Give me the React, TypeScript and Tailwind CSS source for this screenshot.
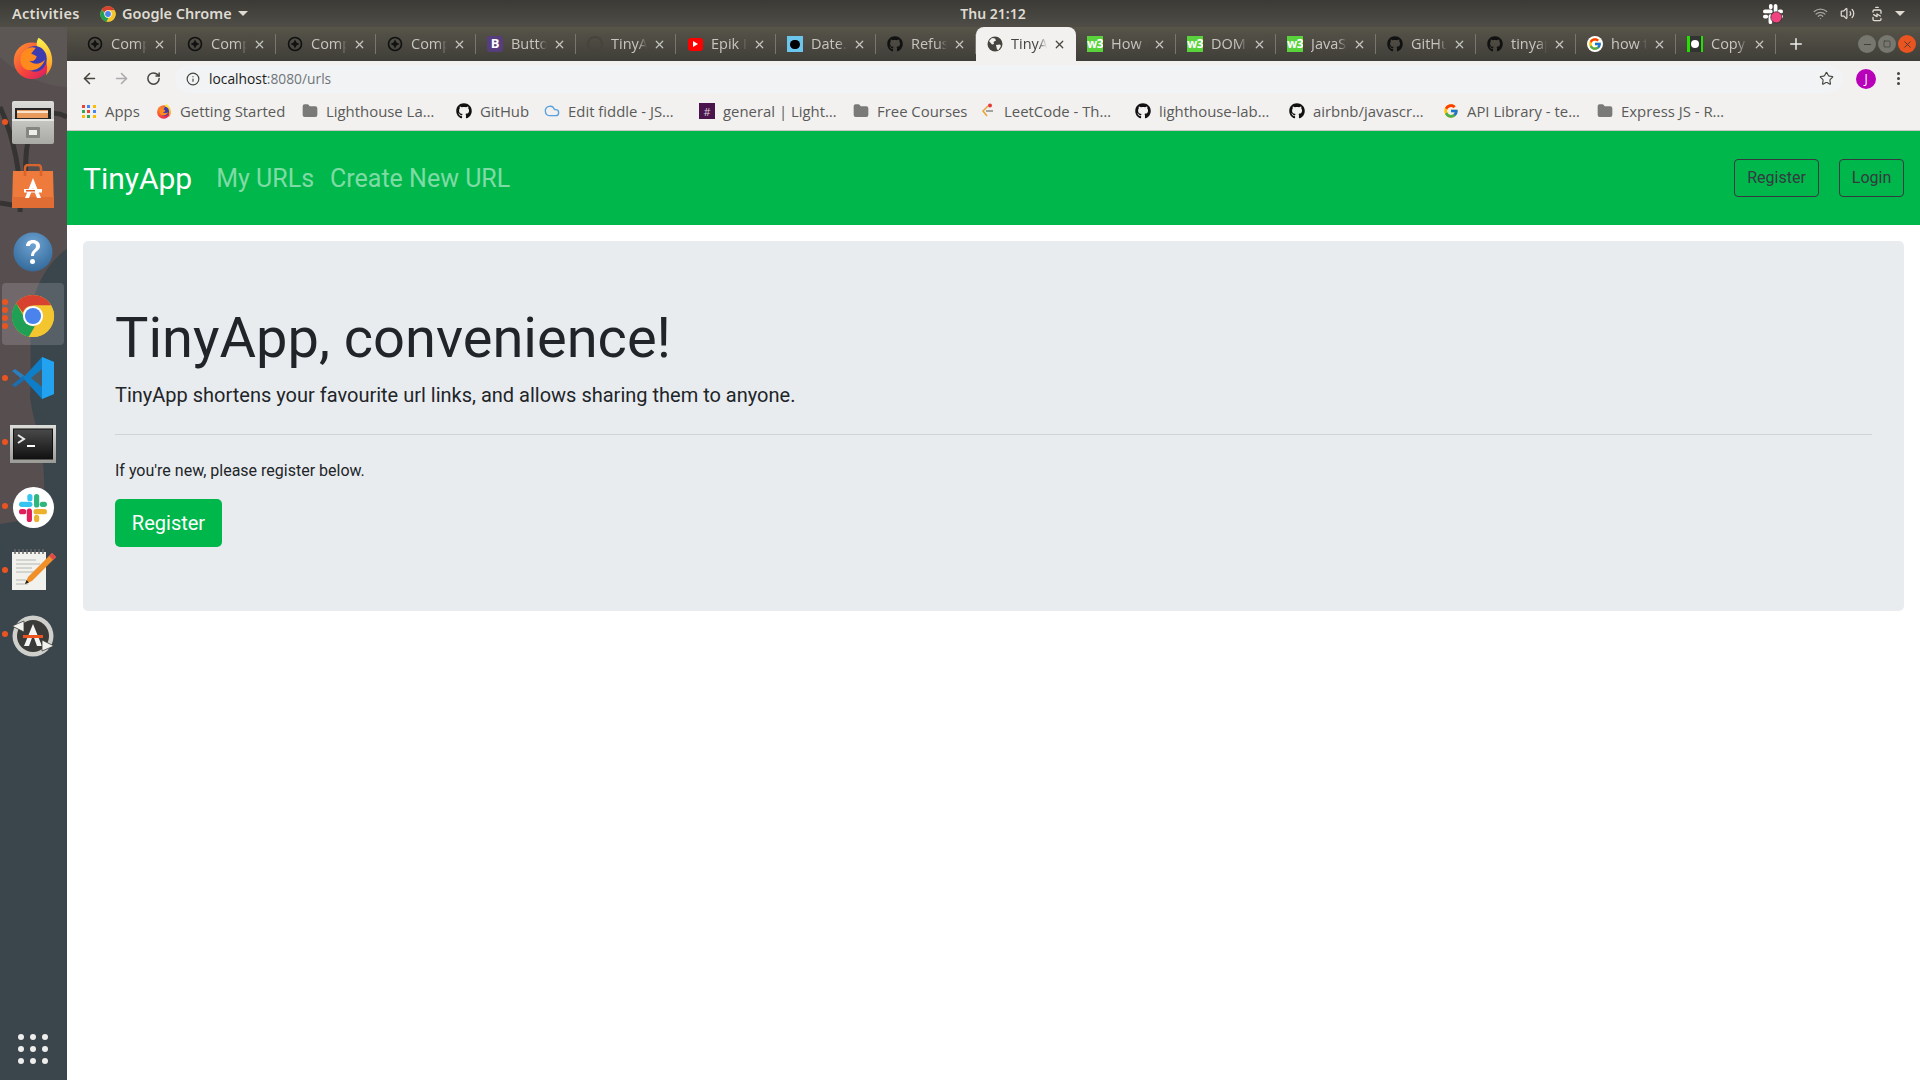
import React from "react";
import { FaGithub } from "react-icons/fa";
import { FcGoogle } from "react-icons/fc";
import { ArrowLeft, ArrowRight, RotateCw, Info, Star, Plus, X, Minus, Square, Folder, Wifi, Volume2, BatteryCharging, Cloud } from "lucide-react";

const ChromeIcon = ({ s = 44 }: { s?: number }) => (
  <svg width={s} height={s} viewBox="0 0 48 48">
    <circle cx="24" cy="24" r="23" fill="#e0c03a" />
    <path d="M24 1a23 23 0 0 1 19.900 11.500H24a11.500 11.500 0 0 0-11 8L5.600 10.200A23 23 0 0 1 24 1z" fill="#d8402f" />
    <path d="M5.600 10.200 14 24.600a11.500 11.500 0 0 0 12 10.700L19.600 46.600A23 23 0 0 1 5.600 10.200z" fill="#1fa055" />
    <path d="M43.900 12.500A23 23 0 0 1 19.600 46.600L30 29.800a11.500 11.500 0 0 0-6-17.300z" fill="#f3c52f" />
    <circle cx="24" cy="24" r="11" fill="#fff" />
    <circle cx="24" cy="24" r="8.800" fill="#4a83ec" />
  </svg>
);

const FirefoxIcon = ({ s = 44 }: { s?: number }) => (
  <svg width={s} height={s} viewBox="0 0 48 48">
    <defs>
      <linearGradient id="ffa" x1="0" y1="0" x2="1" y2="1">
        <stop offset="0" stopColor="#ff9a2e" />
        <stop offset="0.55" stopColor="#f7433c" />
        <stop offset="1" stopColor="#d6156e" />
      </linearGradient>
      <linearGradient id="ffb" x1="0.5" y1="0" x2="0.5" y2="1">
        <stop offset="0" stopColor="#fff44f" />
        <stop offset="1" stopColor="#ff8a1e" />
      </linearGradient>
    </defs>
    <circle cx="23" cy="27" r="20" fill="url(#ffa)" />
    <path d="M30 2c7 4 15 13 15 25 0 7-3 12-7 16 2-6 2-12-1-18-3-5-9-9-9-16 0-3 1-5 2-7z" fill="url(#ffb)" />
    <ellipse cx="26" cy="25" rx="13" ry="14" fill="#3d3bb0" />
    <path d="M12 19c4-6 10-8 15-6l-5 6 6 3c-1 5-5 6-8 5 4 4 11 5 17-1-3 9-11 13-19 11C11 35 8 26 12 19z" fill="#ff8a1e" />
  </svg>
);

const CabinetIcon = () => (
  <svg width="42" height="44" viewBox="0 0 42 44">
    <defs>
      <linearGradient id="cab" x1="0" y1="0" x2="0" y2="1">
        <stop offset="0" stopColor="#dcdcd9" />
        <stop offset="1" stopColor="#a9a9a6" />
      </linearGradient>
    </defs>
    <rect x="0" y="1" width="42" height="43" rx="2" fill="url(#cab)" />
    <rect x="3" y="8" width="36" height="12" fill="#262626" />
    <rect x="5" y="10" width="31" height="8" fill="#e89a5c" />
    <rect x="5" y="11" width="31" height="2" fill="#f7e3d0" />
    <rect x="0" y="19" width="42" height="2" fill="#e7e7e4" />
    <rect x="14" y="27" width="14" height="11" rx="1" fill="#858582" />
    <rect x="17" y="30" width="8" height="5" fill="#eeeeec" />
  </svg>
);

const BagIcon = () => (
  <svg width="42" height="44" viewBox="0 0 42 44">
    <path d="M1 7h40l1 36H0z" fill="#ee7a3c" />
    <path d="M0 33h42v11H0z" fill="#e06e34" />
    <path d="M13 12V4q0-3 3-3h10q3 0 3 3v8" fill="none" stroke="#d9642c" strokeWidth="2.500" />
    <path d="M21 14l-8 20h4l4-10 4 10h4z" fill="#fff" />
    <rect x="12" y="25" width="18" height="3.500" fill="#fff" />
    <rect x="14" y="26" width="9" height="1.500" fill="#e2572a" />
  </svg>
);

const HelpIcon = () => (
  <svg width="40" height="40" viewBox="0 0 40 40">
    <defs>
      <radialGradient id="hlp" cx="0.5" cy="0.3" r="0.8">
        <stop offset="0" stopColor="#6ea3d2" />
        <stop offset="1" stopColor="#2c6394" />
      </radialGradient>
    </defs>
    <circle cx="20" cy="20" r="19.500" fill="url(#hlp)" />
    <path d="M13 14c0-4 3-6 7-6s7 2.400 7 6c0 5-6 5-6 10h-3c0-6 5-6 5-10 0-1.600-1.500-2.700-3-2.700s-3 1-3 2.700z" fill="#fff" />
    <circle cx="19.500" cy="29.500" r="2.500" fill="#fff" />
  </svg>
);

const VSCodeIcon = () => (
  <svg width="42" height="42" viewBox="0 0 42 42">
    <path d="M0 14l3-2 11 8-3 3z" fill="#2a7fbf" />
    <path d="M0 28l3 2 11-8-3-3z" fill="#1a6fb0" />
    <path d="M30 0L11 21l19 21 12-5V5z" fill="#0f7ec9" />
    <path d="M30 0l12 5v32l-12 5z" fill="#23a3ef" />
    <path d="M30 12L19 21l11 9z" fill="#4b5a62" />
  </svg>
);

const TerminalIcon = () => (
  <svg width="46" height="38" viewBox="0 0 46 38">
    <defs>
      <linearGradient id="trm" x1="0" y1="0" x2="0" y2="1">
        <stop offset="0" stopColor="#4a4a4a" />
        <stop offset="1" stopColor="#111" />
      </linearGradient>
      <linearGradient id="trf" x1="0" y1="0" x2="0" y2="1">
        <stop offset="0" stopColor="#dcdcd9" />
        <stop offset="1" stopColor="#9a9a97" />
      </linearGradient>
    </defs>
    <rect width="46" height="38" fill="url(#trf)" />
    <rect x="3.500" y="4" width="39" height="30" fill="url(#trm)" stroke="#111" />
    <path d="M8 10l6 4-6 4" fill="none" stroke="#e8e8e8" strokeWidth="2" />
    <rect x="17" y="20" width="8" height="2" fill="#fff" />
  </svg>
);

const SlackGlyph = ({ s = 28 }: { s?: number }) => (
  <svg width={s} height={s} viewBox="0 0 54 54">
    <g fill="none" strokeWidth="10" strokeLinecap="round">
      <path d="M5 20h16" stroke="#36c5f0" />
      <path d="M21 5v4" stroke="#36c5f0" />
      <path d="M34 5v16" stroke="#2eb67d" />
      <path d="M49 20h-4" stroke="#2eb67d" />
      <path d="M49 34H33" stroke="#ecb22e" />
      <path d="M34 49v-4" stroke="#ecb22e" />
      <path d="M20 49V33" stroke="#e01e5a" />
      <path d="M5 34h4" stroke="#e01e5a" />
    </g>
  </svg>
);

const SlackTray = () => (
  <svg width="20" height="20" viewBox="0 0 54 54">
    <g fill="none" strokeWidth="10" strokeLinecap="round" stroke="#fff">
      <path d="M5 20h16M21 5v4M34 5v16M49 20h-4M49 34H33M20 49V33M5 34h4" />
    </g>
    <circle cx="36" cy="36" r="15" fill="#f0437f" stroke="#2e2d29" strokeWidth="2" />
  </svg>
);

const NotepadIcon = () => (
  <svg width="46" height="42" viewBox="0 0 46 42">
    <rect x="2" y="3" width="34" height="38" fill="#f1f1ee" />
    <g stroke="#666" strokeWidth="1.500">
      {[5, 9, 13, 17, 21, 25, 29, 33].map((x) => <path key={x} d={`M${x} 0v5`} />)}
    </g>
    <g stroke="#b5b5b0" strokeWidth="1">
      <path d="M6 11h20M6 15h24M6 19h16M6 23h20M6 31h10M6 35h12" />
    </g>
    <path d="M42 4l4 4-24 24-7 3 3-7z" fill="#f0902a" />
    <path d="M42 4l4 4-3 3-4-4z" fill="#dd4b4b" />
    <path d="M15 35l1.500-4 2.500 2.500z" fill="#222" />
  </svg>
);

const UpdaterIcon = () => (
  <svg width="42" height="42" viewBox="0 0 42 42">
    <circle cx="21" cy="21" r="20.500" fill="#cfcfcc" />
    <circle cx="21" cy="21" r="16" fill="#3a3a38" />
    <path d="M21 9l-9 22h5l4-11 4 11h5z" fill="#f4f4f2" />
    <rect x="11" y="20" width="20" height="3" fill="#e95420" />
    <path d="M0 11l12-5 0 11z" fill="#f1f1ee" stroke="#3a3a38" strokeWidth="0.800" />
    <path d="M42 31l-12 5 0-11z" fill="#f1f1ee" stroke="#3a3a38" strokeWidth="0.800" />
  </svg>
);

const DockItem = ({ children, dots = 0, active = false, low = false }: { children: React.ReactNode; dots?: number; active?: boolean; low?: boolean }) => (
  <div className="relative h-16 w-[66px] flex items-center justify-center shrink-0">
    {active && <div className="absolute left-[2px] right-[2px] top-[1px] bottom-[1px] rounded bg-white/15" />}
    {dots > 0 && (
      <div className="absolute left-[2px] top-0 bottom-0 flex flex-col justify-center gap-[2px]">
        {Array.from({ length: dots }).map((_, i) => (
          <span key={i} className="w-[6px] h-[6px] rounded-full bg-[#e95420]" />
        ))}
      </div>
    )}
    <div className={`relative flex items-center justify-center ${low ? "pt-[3px]" : ""}`}>{children}</div>
  </div>
);

const Dock = () => (
  <aside className="relative w-[67px] shrink-0 bg-[#3a454c] overflow-hidden">
    <svg className="absolute left-0 top-0" width="67" height="1053" viewBox="0 0 67 1053">
      <path d="M0 0H67V222C52 232 40 250 34 270C28 300 32 340 30 370C34 400 46 420 44 470C42 490 24 494 0 497Z" fill="#574e50" />
      <path d="M0 0H67V60C40 60 10 40 0 30Z" fill="#5c5754" />
      <path d="M0 80C14 110 22 150 20 185" fill="none" stroke="#363432" strokeWidth="5" />
      <path d="M67 90C50 80 28 90 26 130C24 160 30 170 12 178L0 176" fill="none" stroke="#363432" strokeWidth="5" />
    </svg>
    <div className="relative flex flex-col h-full -mt-px">
      <DockItem><FirefoxIcon /></DockItem>
      <DockItem dots={1}><CabinetIcon /></DockItem>
      <DockItem><BagIcon /></DockItem>
      <DockItem low><HelpIcon /></DockItem>
      <DockItem dots={4} active low><ChromeIcon /></DockItem>
      <DockItem dots={1}><VSCodeIcon /></DockItem>
      <DockItem dots={1} low><TerminalIcon /></DockItem>
      <DockItem dots={1} low>
        <div className="w-[41px] h-[41px] rounded-full bg-white flex items-center justify-center"><SlackGlyph /></div>
      </DockItem>
      <DockItem dots={1}><NotepadIcon /></DockItem>
      <DockItem dots={1} low><UpdaterIcon /></DockItem>
      <div className="mt-auto mb-[15px] w-[66px] flex justify-center">
        <div className="grid grid-cols-3 gap-x-[6px] gap-y-[6px]">
          {Array.from({ length: 9 }).map((_, i) => (
            <span key={i} className="w-[6px] h-[6px] rounded-full bg-[#eeeeec]" />
          ))}
        </div>
      </div>
    </div>
  </aside>
);

const W3 = () => (
  <span className="w-4 h-4 bg-[#5ad23c] flex items-center justify-center text-white text-[12px] font-bold leading-none tracking-[-0.5px] overflow-hidden">w3</span>
);
const CompIcon = () => (
  <svg width="16" height="16" viewBox="0 0 16 16">
    <circle cx="8" cy="8" r="6.500" fill="none" stroke="#111" strokeWidth="1.600" />
    <path d="M8 3.500L9.500 6.500 12.500 8 9.500 9.500 8 12.500 6.500 9.500 3.500 8 6.500 6.500z" fill="#111" />
  </svg>
);
const GlobeFill = ({ c = "#45443e" }: { c?: string }) => (
  <svg width="16" height="16" viewBox="0 0 16 16">
    <circle cx="8" cy="8" r="7.500" fill={c} />
    <path d="M2 5l3-3 3 .5 1 2-2.500 1.500.5 2-2 .5zM9 9l4-.5 1 1.500-2.500 4-1.500-.5z" fill="#f2f1f0" />
  </svg>
);

const tabs: { t: string; i: React.ReactNode; active?: boolean }[] = [
  { t: "Comp", i: <CompIcon /> },
  { t: "Comp", i: <CompIcon /> },
  { t: "Comp", i: <CompIcon /> },
  { t: "Comp", i: <CompIcon /> },
  { t: "Butto", i: <span className="w-4 h-4 rounded-[3px] bg-[#563d7c] text-white text-[13px] font-bold flex items-center justify-center">B</span> },
  { t: "TinyA", i: <span className="w-4 h-4 rounded-full border-2 border-[#45443e]" /> },
  { t: "Epik I", i: <span className="w-[15px] h-[13px] rounded-[3px] bg-[#f00] flex items-center justify-center"><span className="w-0 h-0 border-y-[3px] border-y-transparent border-l-[5px] border-l-white" /></span> },
  { t: "Date.", i: <span className="w-4 h-4 bg-[#6cc5ec] flex items-center justify-center"><span className="w-[10px] h-[9px] rounded-full bg-black" /></span> },
  { t: "Refus", i: <FaGithub size={16} className="text-[#111]" /> },
  { t: "TinyA", i: <GlobeFill />, active: true },
  { t: "How t", i: <W3 /> },
  { t: "DOM", i: <W3 /> },
  { t: "JavaS", i: <W3 /> },
  { t: "GitHu", i: <FaGithub size={16} className="text-[#111]" /> },
  { t: "tinyap", i: <FaGithub size={16} className="text-[#111]" /> },
  { t: "how t", i: <span className="w-4 h-4 rounded-full bg-white flex items-center justify-center"><FcGoogle size={14} /></span> },
  { t: "Copy", i: <span className="w-4 h-4 bg-[#22e000] flex items-center justify-center"><span className="w-[11px] h-4 bg-[#333] flex items-center justify-center"><span className="w-[8px] h-[8px] rounded-full bg-white" /></span></span> },
];

const Tab = ({ t, i, active }: { t: string; i: React.ReactNode; active?: boolean }) => (
  <div className={`relative w-[100px] h-[34px] shrink-0 flex items-center pl-[11px] ${active ? "bg-[#f2f1f0] rounded-t-lg text-[#45443e]" : "text-[#c6c5bf]"}`}>
    <span className="w-4 h-4 flex items-center justify-center shrink-0">{i}</span>
    <span className="ml-[8px] w-[36px] overflow-hidden whitespace-nowrap text-[14.500px] [mask-image:linear-gradient(to_right,black_75%,transparent)]">{t}</span>
    <X size={13} strokeWidth={2.200} className="ml-[6px] shrink-0" />
    {!active && <span className="ml-auto w-px h-[20px] bg-[#77766f]" />}
  </div>
);

const bookmarks: { w: number; t: string; i: React.ReactNode }[] = [
  { w: 75, t: "Apps", i: (
    <span className="grid grid-cols-3 gap-[2px] w-[14px]">
      {["#ea4335","#4285f4","#fbbc05","#34a853","#ea4335","#4285f4","#fbbc05","#34a853","#fbbc05"].map((c, i) => <span key={i} className="w-[3px] h-[3px]" style={{ background: c }} />)}
    </span>) },
  { w: 146, t: "Getting Started", i: <FirefoxIcon s={16} /> },
  { w: 154, t: "Lighthouse La…", i: <Folder size={16} fill="#7a7a78" className="text-[#7a7a78]" /> },
  { w: 88, t: "GitHub", i: <FaGithub size={16} className="text-[#111]" /> },
  { w: 155, t: "Edit fiddle - JS…", i: <Cloud size={16} className="text-[#5aa0dc]" /> },
  { w: 154, t: "general | Light…", i: <span className="w-4 h-4 bg-[#4a154b] flex items-center justify-center text-[#d9c6d9] text-[11px] leading-none">#</span> },
  { w: 127, t: "Free Courses", i: <Folder size={16} fill="#7a7a78" className="text-[#7a7a78]" /> },
  { w: 155, t: "LeetCode - Th…", i: (
    <svg width="16" height="16" viewBox="0 0 16 16"><path d="M8 3L3 8l4 5" fill="none" stroke="#e8a33a" strokeWidth="1.500" /><path d="M6 8h7" stroke="#888" strokeWidth="1.500" /><circle cx="10" cy="2.500" r="2" fill="#e53935" /></svg>) },
  { w: 154, t: "lighthouse-lab…", i: <FaGithub size={16} className="text-[#111]" /> },
  { w: 154, t: "airbnb/javascr…", i: <FaGithub size={16} className="text-[#111]" /> },
  { w: 154, t: "API Library - te…", i: <FcGoogle size={16} /> },
  { w: 140, t: "Express JS - R…", i: <Folder size={16} fill="#7a7a78" className="text-[#7a7a78]" /> },
];

const Browser = () => (
  <div className="flex-1 min-w-0 flex flex-col bg-white">
    <div className="h-[34px] flex items-end bg-gradient-to-b from-[#575449] to-[#3f3e38] pl-[9px]">
      {tabs.map((tb, i) => <Tab key={i} {...tb} />)}
      <Plus size={18} strokeWidth={2} className="ml-[11px] mb-[8px] text-[#eeeeec]" />
      <div className="ml-auto mr-[4px] mb-[8px] flex gap-[2px]">
        <span className="w-[18px] h-[18px] rounded-full bg-[#77766f] flex items-center justify-center"><Minus size={11} className="text-[#3c3b37]" /></span>
        <span className="w-[18px] h-[18px] rounded-full bg-[#77766f] flex items-center justify-center"><Square size={8} className="text-[#3c3b37]" /></span>
        <span className="w-[18px] h-[18px] rounded-full bg-[#e95420] flex items-center justify-center"><X size={11} className="text-[#3c3b37]" /></span>
      </div>
    </div>
    <div className="h-[35px] bg-[#f2f1f0] flex items-center text-[#5a5a58]">
      <ArrowLeft size={17} strokeWidth={2.200} className="ml-[14px] text-[#45443e]" />
      <ArrowRight size={17} strokeWidth={2.200} className="ml-[15px] text-[#aaa]" />
      <RotateCw size={15} strokeWidth={2.400} className="ml-[16px] text-[#45443e]" />
      <div className="ml-[14px] w-[1668px] h-[28px] rounded-full bg-[#f1f3f4] flex items-center pl-[11px] pr-[3px]">
        <Info size={14} className="text-[#45443e]" />
        <span className="ml-[9px] text-[13.800px] leading-none"><span className="text-[#1c1c1c]">localhost</span><span className="text-[#70757a]">:8080/urls</span></span>
        <Star size={15} strokeWidth={1.800} className="ml-auto mr-[6px] text-[#45443e]" />
      </div>
      <span className="ml-[13px] w-5 h-5 rounded-full bg-[#b800b8] text-white text-[12px] flex items-center justify-center">J</span>
      <span className="ml-[21px] flex flex-col gap-[2px]">
        <i className="w-[3px] h-[3px] rounded-full bg-[#45443e]" />
        <i className="w-[3px] h-[3px] rounded-full bg-[#45443e]" />
        <i className="w-[3px] h-[3px] rounded-full bg-[#45443e]" />
      </span>
    </div>
    <div className="h-[35px] bg-[#f2f1f0] border-b border-b-[#c8c7c4] flex items-center pl-[14px] pb-[3px] text-[14.900px] text-[#5a5a58]">
      {bookmarks.map((b) => (
        <div key={b.t} className="flex items-center shrink-0" style={{ width: b.w }}>
          <span className="w-4 h-4 flex items-center justify-center shrink-0">{b.i}</span>
          <span className="ml-2 whitespace-nowrap">{b.t}</span>
        </div>
      ))}
    </div>
    <nav className="h-[94px] bg-[#00b74b] flex items-center px-4 font-[Roboto,sans-serif]">
      <span className="text-[30px] text-white">TinyApp</span>
      <span className="ml-[24px] mt-[1px] text-[25px] text-white/50">My URLs</span>
      <span className="ml-[16px] mt-[1px] text-[25px] text-white/50">Create New URL</span>
      <button className="ml-auto w-[85px] h-[38px] rounded border border-[#343a40] text-[#343a40] text-[16px]">Register</button>
      <button className="ml-[20px] w-[65px] h-[38px] rounded border border-[#343a40] text-[#343a40] text-[16px]">Login</button>
    </nav>
    <main className="mx-4 mt-4 h-[370px] bg-[#e9ecef] rounded-[5px] px-8 pt-[64px] text-[#212529] font-[Roboto,sans-serif]">
      <h1 className="text-[56px] leading-[67px] font-normal">TinyApp, convenience!</h1>
      <p className="mt-2 text-[20px] leading-[30px]">TinyApp shortens your favourite url links, and allows sharing them to anyone.</p>
      <hr className="mt-[24px] border-t border-t-[#d2d5d8]" />
      <p className="mt-[24px] text-[16px] leading-6">If you're new, please register below.</p>
      <button className="mt-4 w-[107px] h-12 rounded-[5px] bg-[#00b74b] text-white text-[20px]">Register</button>
    </main>
  </div>
);

const TopBar = () => (
  <header className="h-[27px] shrink-0 flex items-center bg-gradient-to-b from-[#3b3a36] to-[#4f4d46] text-[#dfdbd2] text-[14.500px] font-semibold font-['Noto_Sans',sans-serif]">
    <span className="ml-3 w-[88px] tracking-[0.3px]">Activities</span>
    <ChromeIcon s={16} />
    <span className="ml-[6px] w-[112px] whitespace-nowrap">Google Chrome</span>
    <span className="ml-[4px] w-0 h-0 border-x-[5px] border-x-transparent border-t-[5px] border-t-[#dfdbd2]" />
    <span className="ml-[710px] w-[70px] text-center whitespace-nowrap text-[14px]">Thu 21:12</span>
    <span className="ml-[735px] flex"><SlackTray /></span>
    <Wifi size={15} className="ml-[30px] text-[#a5a39c]" />
    <Volume2 size={15} className="ml-[12px]" />
    <BatteryCharging size={16} className="ml-[14px] -rotate-90" />
    <span className="ml-[10px] w-0 h-0 border-x-[5px] border-x-transparent border-t-[5px] border-t-[#dfdbd2]" />
  </header>
);

export default function App() {
  return (
    <div className="w-[1920px] h-[1080px] overflow-hidden flex flex-col font-['Open_Sans',sans-serif]">
      <TopBar />
      <div className="flex-1 min-h-0 flex">
        <Dock />
        <Browser />
      </div>
    </div>
  );
}
